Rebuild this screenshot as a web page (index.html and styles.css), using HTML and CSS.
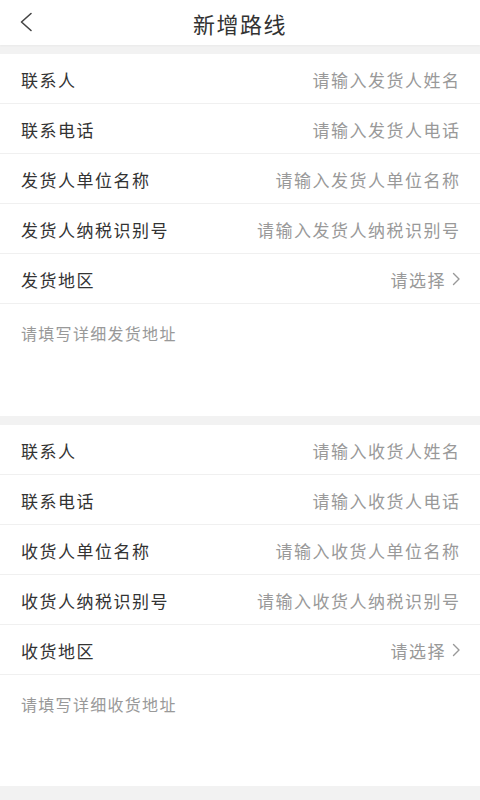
FILE: index.html
```html
<!DOCTYPE html>
<html lang="zh">
<head>
<meta charset="utf-8">
<link rel="stylesheet" href="styles.css">
</head>
<body>
<div class="page">
  <header class="topbar">
    <svg class="back" width="14" height="20" viewBox="0 0 14 20"><path d="M12 1.5 L2.5 10 L12 18.5" fill="none" stroke="#444" stroke-width="1.6" stroke-linecap="round" stroke-linejoin="round"/></svg>
    <h1 class="title">新增路线</h1>
  </header>
  <div class="gap"></div>
  <section class="card">
    <div class="row"><span class="label">联系人</span><span class="ph">请输入发货人姓名</span></div>
    <div class="row"><span class="label">联系电话</span><span class="ph">请输入发货人电话</span></div>
    <div class="row"><span class="label">发货人单位名称</span><span class="ph">请输入发货人单位名称</span></div>
    <div class="row"><span class="label">发货人纳税识别号</span><span class="ph">请输入发货人纳税识别号</span></div>
    <div class="row"><span class="label">发货地区</span><span class="ph sel">请选择<svg class="chev" width="9" height="14" viewBox="0 0 9 14"><path d="M1.5 1.5 L7 7 L1.5 12.5" fill="none" stroke="#999" stroke-width="1.4" stroke-linecap="round" stroke-linejoin="round"/></svg></span></div>
    <div class="addr">请填写详细发货地址</div>
  </section>
  <div class="gap"></div>
  <section class="card">
    <div class="row"><span class="label">联系人</span><span class="ph">请输入收货人姓名</span></div>
    <div class="row"><span class="label">联系电话</span><span class="ph">请输入收货人电话</span></div>
    <div class="row"><span class="label">收货人单位名称</span><span class="ph">请输入收货人单位名称</span></div>
    <div class="row"><span class="label">收货人纳税识别号</span><span class="ph">请输入收货人纳税识别号</span></div>
    <div class="row"><span class="label">收货地区</span><span class="ph sel">请选择<svg class="chev" width="9" height="14" viewBox="0 0 9 14"><path d="M1.5 1.5 L7 7 L1.5 12.5" fill="none" stroke="#999" stroke-width="1.4" stroke-linecap="round" stroke-linejoin="round"/></svg></span></div>
    <div class="addr">请填写详细收货地址</div>
  </section>
  <div class="gap tail"></div>
</div>
</body>
</html>
```
FILE: styles.css
```css
* { box-sizing: border-box; margin: 0; padding: 0; }
html, body { background: #f2f2f2; }
body {
  font-family: "Noto Sans CJK SC", "Noto Sans", sans-serif;
  width: 480px;
  height: 800px;
  overflow: hidden;
}
.page { display: flex; flex-direction: column; }
.topbar {
  height: 45px;
  background: #fff;
  display: flex;
  align-items: center;
  justify-content: center;
  position: relative;
  box-shadow: 0 1px 2px rgba(0,0,0,0.04);
}
.back { position: absolute; left: 19px; top: 12px; }
.title {
  font-size: 22px;
  font-weight: 400;
  color: #333;
  letter-spacing: 1.5px;
}
.gap { height: 9px; background: #f2f2f2; }
.gap.tail { height: 20px; }
.card { background: #fff; display: flex; flex-direction: column; }
.row {
  height: 50px;
  display: flex;
  align-items: center;
  justify-content: space-between;
  padding: 1px 21px 0 21px;
  border-bottom: 1px solid #f0f0f0;
}
.label { font-size: 17px; color: #333; letter-spacing: 1.5px; }
.ph { font-size: 17px; color: #999; display: flex; align-items: center; letter-spacing: 1.5px; margin-right: -1.5px; }
.sel { margin-right: -2px; }
.chev { margin-left: 6px; }
.addr {
  height: 112px;
  padding: 17px 21px 0;
  font-size: 16px;
  color: #999;
  letter-spacing: 1.3px;
}
.card + .gap + .card .addr { height: 111px; }
```
